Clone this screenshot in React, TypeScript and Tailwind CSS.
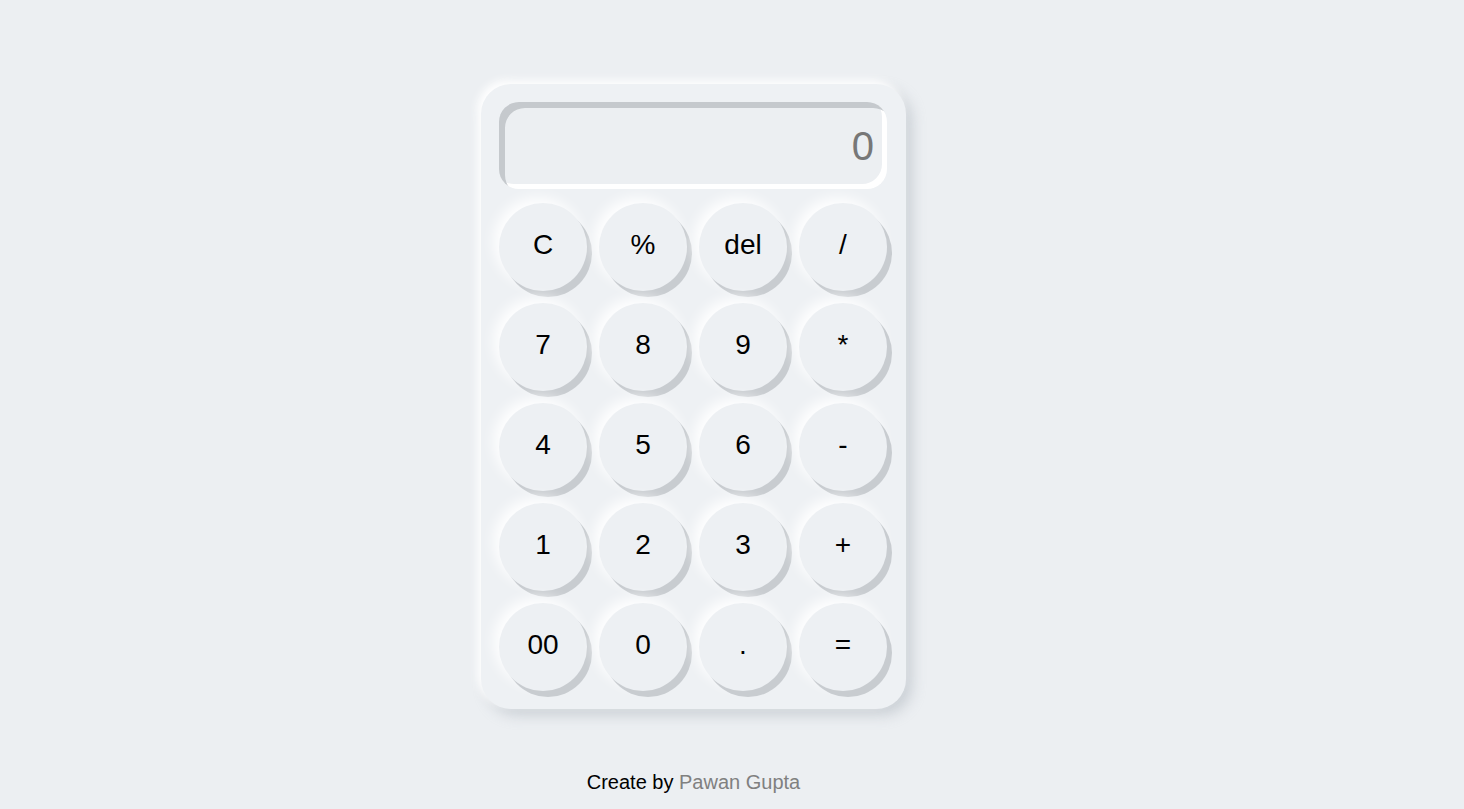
import React, { useState } from "react";

const keys = ["C", "%", "del", "/", "7", "8", "9", "*", "4", "5", "6", "-", "1", "2", "3", "+", "00", "0", ".", "="];

export default function App() {
  const [value, setValue] = useState("0");

  const press = (k: string) => {
    if (k === "C") return setValue("0");
    if (k === "del") return setValue(value.length > 1 ? value.slice(0, -1) : "0");
    if (k === "=") {
      try {
        // eslint-disable-next-line no-new-func
        const r = Function(`return (${value})`)();
        setValue(String(r));
      } catch {
        setValue("Error");
      }
      return;
    }
    setValue(value === "0" && k !== "." ? k : value + k);
  };

  return (
    <div className="min-h-screen bg-[#eceff2] flex flex-col items-center pt-[84px] pr-[77px] font-['Liberation_Sans',Arial,sans-serif]">
      {/* Calculator body */}
      <div className="w-[425px] rounded-[30px] bg-[#eef1f4] p-[18px] pr-[19px] shadow-[-4px_-4px_8px_#ffffff,6px_6px_14px_rgba(160,168,178,0.45)]">
        <div className="h-[87px] w-[388px] rounded-[20px] bg-[#eceff2] flex items-center justify-end pr-[13px] shadow-[inset_6px_6px_0_#c5c9cd,inset_-5px_-5px_0_#ffffff]">
          <span className="text-[40px] text-[#777777] leading-none">{value}</span>
        </div>

        <div className="mt-[14px] grid grid-cols-[repeat(4,88px)] gap-[12px]">
          {keys.map((k) => (
            <button
              key={k}
              onClick={() => press(k)}
              className="h-[88px] w-[88px] rounded-full bg-[#edf0f3] text-[28px] leading-none text-black flex items-center justify-center pb-[4px] shadow-[5px_6px_0_#c8ccd0,-5px_-5px_14px_#ffffff] active:shadow-[inset_3px_3px_6px_#c8ccd0]"
            >
              {k}
            </button>
          ))}
        </div>
      </div>

      <p className="mt-[58px] text-[20px] text-black">
        Create by <span className="text-[#808080]">Pawan Gupta</span>
      </p>
    </div>
  );
}
